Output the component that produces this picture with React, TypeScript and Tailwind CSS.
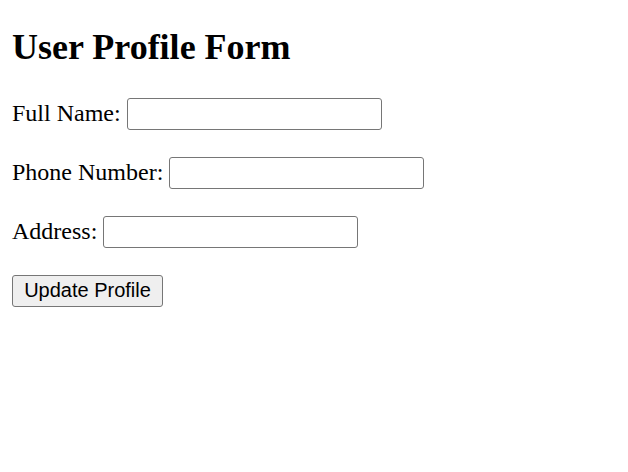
export default function App() {
  const fields = [
    { label: "Full Name:", id: "name" },
    { label: "Phone Number:", id: "phone" },
    { label: "Address:", id: "address" },
  ];

  return (
    <div className="min-h-screen bg-white px-[12px] pt-[27px] text-black font-['Liberation_Serif',serif]">
      <h1 className="text-[36px] font-bold leading-[40px]">User Profile Form</h1>
      <form className="mt-[31px] flex flex-col gap-[27px]" onSubmit={(e) => e.preventDefault()}>
        {fields.map((f) => (
          <div key={f.id} className="flex h-[32px] items-center gap-[6px] text-[24px]">
            <label htmlFor={f.id} className="pb-[3px]">
              {f.label}
            </label>
            <input
              id={f.id}
              type="text"
              className="box-border h-[32px] w-[255px] rounded-[3px] border border-[#767676] bg-white px-[3px]"
            />
          </div>
        ))}
        <div>
          <button
            type="submit"
            className="box-border h-[32px] w-[151px] rounded-[3px] border border-[#767676] bg-[#efefef] px-[9px] pb-[2px] text-[20px] leading-none font-['Liberation_Sans',Arial,sans-serif]"
          >
            Update Profile
          </button>
        </div>
      </form>
    </div>
  );
}
